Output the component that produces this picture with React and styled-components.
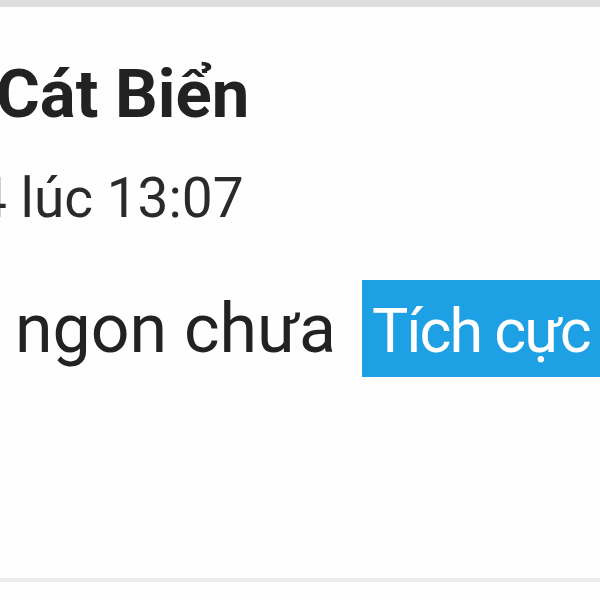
import styled, { createGlobalStyle } from 'styled-components';

const Global = createGlobalStyle`
 html, body {
  margin: 0;
  padding: 0;
  background: #fefefe;
 }
 body {
  font-family: Roboto, "Noto Sans", sans-serif;
 }
`;

const Page = styled.div`
 width: 600px;
 height: 600px;
 overflow: hidden;
 display: flex;
 flex-direction: column;
 background: #fefefe;
`;

const TopBand = styled.div`
 height: 7px;
 background: #dedede;
 flex-shrink: 0;
`;

const Card = styled.div`
 height: 571px;
 border-bottom: 4px solid #ececec;
 display: flex;
 flex-direction: column;
 overflow: hidden;
`;

const Line = styled.div`
 white-space: nowrap;
 color: ${(p) => p.color || '#222'};
 font-size: ${(p) => p.size}px;
 font-weight: ${(p) => p.weight || 400};
 line-height: 1;
 margin-left: ${(p) => p.shift}px;
 margin-top: ${(p) => p.gap}px;
`;

const Tag = styled.span`
 display: inline-block;
 background: #1da1e4;
 color: #fff;
 font-size: 61px;
 letter-spacing: -2px;
 line-height: 92px;
 padding: 5px 40px 0 10px;
 margin-left: 26px;
`;

const App = () => {
 return (
  <Page>
   <Global />
   <TopBand />
   <Card>
    <Line size={67} weight={700} shift={-4} gap={54}>
     Cát Biển
    </Line>
    <Line size={55} shift={-24} gap={43} color='#2a2a2a'>
     4 lúc 13:07
    </Line>
    <Line size={68} shift={15} gap={54}>
     ngon chưa<Tag>Tích cực</Tag>
    </Line>
   </Card>
  </Page>
 );
};

export default App;
